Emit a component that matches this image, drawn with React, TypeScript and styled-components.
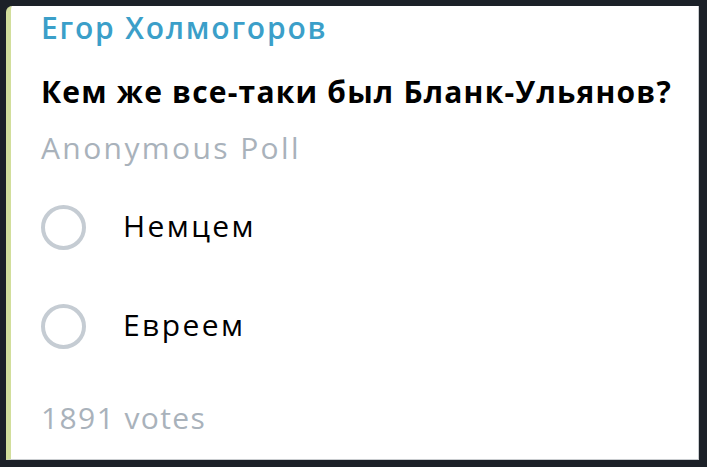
import React from 'react';
import styled, { createGlobalStyle } from 'styled-components';

const GlobalStyle = createGlobalStyle`
  html, body {
    margin: 0;
    padding: 0;
    background: #1c2128;
  }
  body {
    font-family: 'Open Sans', 'Noto Sans', sans-serif;
  }
`;

const Frame = styled.div`
  width: 707px;
  height: 467px;
  box-sizing: border-box;
  padding: 6px 8px 7px 6px;
  display: flex;
`;

const Card = styled.div`
  flex: 1;
  display: flex;
  background: #ffffff;
  border-left: 5px solid #d2de9c;
  border-top-left-radius: 6px;
  border-right: 1px solid #c9cccf;
  border-bottom: 1px solid #c9cccf;
`;

const Body = styled.div`
  flex: 1;
  display: flex;
  flex-direction: column;
  padding: 3px 0 0 30px;
`;

const Author = styled.div`
  font-size: 30px;
  line-height: 38px;
  font-weight: 600;
  letter-spacing: 1.8px;
  color: #3b9fc9;
`;

const Question = styled.div`
  margin-top: 26px;
  font-size: 30px;
  line-height: 38px;
  font-weight: 700;
  letter-spacing: 1.2px;
  color: #000;
  white-space: nowrap;
`;

const Meta = styled.div<{ $gap: number; $spacing: number }>`
  margin-top: ${p => p.$gap}px;
  font-size: 30px;
  line-height: 38px;
  letter-spacing: ${p => p.$spacing}px;
  color: #a9b2bb;
`;

const Options = styled.div`
  margin-top: 30px;
  display: flex;
  flex-direction: column;
  gap: 39px;
`;

const Option = styled.div`
  height: 60px;
  display: flex;
  align-items: center;
  gap: 37px;
`;

const Radio = styled.span`
  width: 45px;
  height: 45px;
  box-sizing: border-box;
  border-radius: 50%;
  border: 4px solid #c5ccd3;
  flex-shrink: 0;
`;

const OptionText = styled.span`
  font-size: 30px;
  line-height: 38px;
  letter-spacing: 2.4px;
  color: #000;
  margin-top: -3px;
`;

const options = ['Немцем', 'Евреем'];

export default function App() {
  return (
    <>
      <GlobalStyle />
      <Frame>
        <Card>
          <Body>
            <Author>Егор Холмогоров</Author>
            <Question>Кем же все-таки был Бланк-Ульянов?</Question>
            <Meta $gap={18} $spacing={2.4}>Anonymous Poll</Meta>
            <Options>
              {options.map(o => (
                <Option key={o}>
                  <Radio />
                  <OptionText>{o}</OptionText>
                </Option>
              ))}
            </Options>
            <Meta $gap={43} $spacing={1.4}>1891 votes</Meta>
          </Body>
        </Card>
      </Frame>
    </>
  );
}
